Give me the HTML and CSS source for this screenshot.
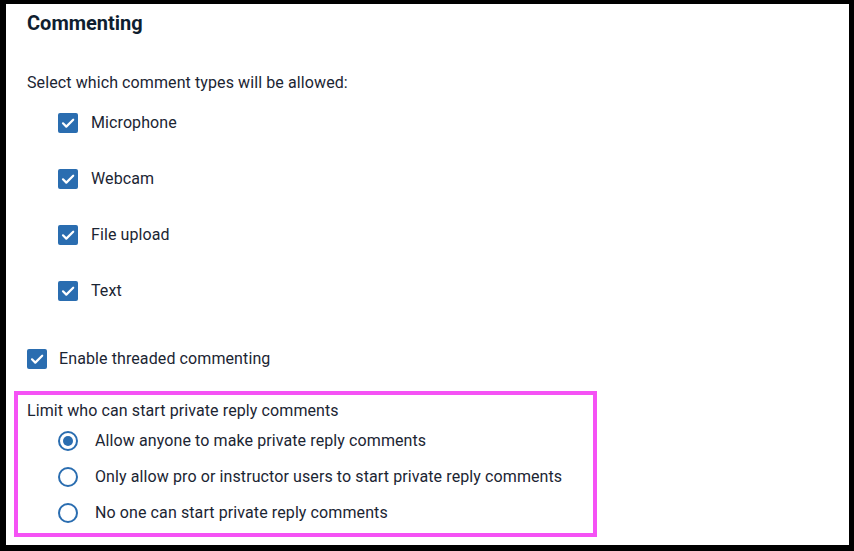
FILE: index.html
```html
<!DOCTYPE html>
<html>
<head>
<meta charset="utf-8">
<link rel="stylesheet" href="styles.css">
</head>
<body>
<div class="frame">
  <h2 class="title">Commenting</h2>
  <p class="intro">Select which comment types will be allowed:</p>
  <ul class="types">
    <li class="row"><span class="check"><svg viewBox="0 0 20 20" width="20" height="20"><path d="M5 10.3l3.3 3.3L15.2 6.7" fill="none" stroke="#fff" stroke-width="2.2" stroke-linecap="round" stroke-linejoin="round"/></svg></span><span>Microphone</span></li>
    <li class="row"><span class="check"><svg viewBox="0 0 20 20" width="20" height="20"><path d="M5 10.3l3.3 3.3L15.2 6.7" fill="none" stroke="#fff" stroke-width="2.2" stroke-linecap="round" stroke-linejoin="round"/></svg></span><span>Webcam</span></li>
    <li class="row"><span class="check"><svg viewBox="0 0 20 20" width="20" height="20"><path d="M5 10.3l3.3 3.3L15.2 6.7" fill="none" stroke="#fff" stroke-width="2.2" stroke-linecap="round" stroke-linejoin="round"/></svg></span><span>File upload</span></li>
    <li class="row"><span class="check"><svg viewBox="0 0 20 20" width="20" height="20"><path d="M5 10.3l3.3 3.3L15.2 6.7" fill="none" stroke="#fff" stroke-width="2.2" stroke-linecap="round" stroke-linejoin="round"/></svg></span><span>Text</span></li>
  </ul>
  <div class="row threaded"><span class="check"><svg viewBox="0 0 20 20" width="20" height="20"><path d="M5 10.3l3.3 3.3L15.2 6.7" fill="none" stroke="#fff" stroke-width="2.2" stroke-linecap="round" stroke-linejoin="round"/></svg></span><span>Enable threaded commenting</span></div>
  <div class="private">
    <p class="legend">Limit who can start private reply comments</p>
    <ul class="radios">
      <li class="row radio-row"><span class="radio on"></span><span>Allow anyone to make private reply comments</span></li>
      <li class="row radio-row"><span class="radio"></span><span>Only allow pro or instructor users to start private reply comments</span></li>
      <li class="row radio-row"><span class="radio"></span><span>No one can start private reply comments</span></li>
    </ul>
  </div>
</div>
</body>
</html>
```
FILE: styles.css
```css
html, body {
  margin: 0;
  padding: 0;
  background: #000;
}
body {
  font-family: Roboto, "Liberation Sans", sans-serif;
  color: #1b2533;
  font-size: 16px;
  letter-spacing: 0.1px;
}
.frame {
  box-sizing: border-box;
  width: 854px;
  height: 551px;
  background: #fff;
  border-style: solid;
  border-color: #000;
  border-width: 4px 5px 6px 6px;
  padding-left: 8px;
  display: flex;
  flex-direction: column;
  align-items: flex-start;
}
.title {
  margin: 7px 0 0 13px;
  font-size: 20px;
  line-height: 24px;
  font-weight: 700;
  color: #0f1e30;
  letter-spacing: 0;
}
.intro {
  margin: 36px 0 0 13px;
  line-height: 24px;
}
ul {
  list-style: none;
  margin: 0;
  padding: 0;
}
.types {
  margin: 16px 0 0 44px;
  display: flex;
  flex-direction: column;
  gap: 32px;
}
.row {
  display: flex;
  align-items: center;
  gap: 13px;
  line-height: 24px;
}
.check {
  width: 20px;
  height: 20px;
  border-radius: 2px;
  background: #2a6db0;
  display: flex;
}
.threaded {
  margin: 44px 0 0 13px;
  gap: 12px;
}
.private {
  box-sizing: border-box;
  width: 583px;
  margin-top: 20px;
  border: 4px solid #f552f5;
  padding: 4px 9px 8px 9px;
}
.legend {
  margin: 0;
  line-height: 24px;
}
.radios {
  margin: 6px 0 0 31px;
  display: flex;
  flex-direction: column;
  gap: 12px;
}
.radio-row {
  gap: 17px;
}
.radio {
  box-sizing: border-box;
  width: 20px;
  height: 20px;
  border-radius: 50%;
  border: 2px solid #2a6db0;
  display: flex;
  align-items: center;
  justify-content: center;
}
.radio.on::after {
  content: "";
  width: 10px;
  height: 10px;
  border-radius: 50%;
  background: #2a6db0;
}
```
